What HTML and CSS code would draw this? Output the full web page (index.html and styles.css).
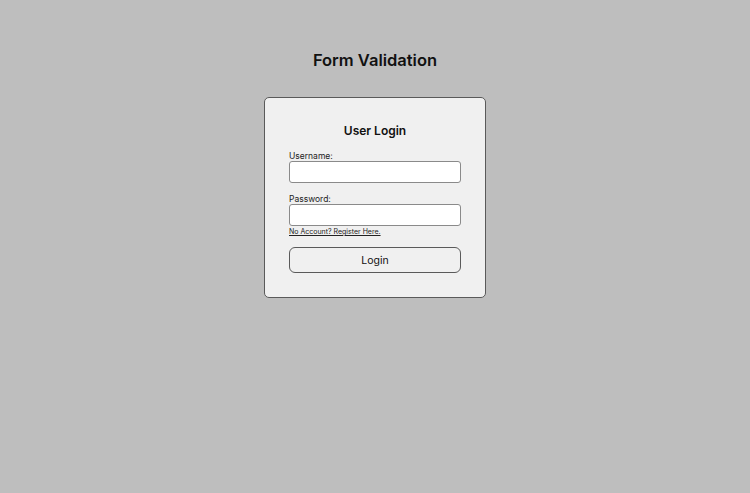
FILE: index.html
```html
<!DOCTYPE html>
<html>
<head>
<meta charset="utf-8">
<link rel="stylesheet" href="styles.css">
</head>
<body>
<main class="page">
  <h1 class="title">Form Validation</h1>
  <form class="card">
    <h2 class="card-title">User Login</h2>
    <label class="label" for="u">Username:</label>
    <input class="input" id="u" type="text">
    <label class="label label-pw" for="p">Password:</label>
    <input class="input" id="p" type="password">
    <a class="link" href="#">No Account? Register Here.</a>
    <button class="btn" type="button">Login</button>
  </form>
</main>
</body>
</html>
```
FILE: styles.css
```css
html, body {
  margin: 0;
  padding: 0;
  background: #bebebe;
  height: 100%;
}
body {
  font-family: "Inter", "Noto Sans", sans-serif;
  color: #111;
}
.page {
  display: flex;
  flex-direction: column;
  align-items: center;
  padding-top: 48px;
}
.title {
  margin: 0;
  font-size: 16.5px;
  font-weight: 600;
  line-height: 24px;
}
.card {
  margin-top: 25px;
  width: 172px;
  padding: 21px 24px 24px;
  background: #f0f0f0;
  border: 1px solid #5a5a5a;
  border-radius: 5px;
  display: flex;
  flex-direction: column;
}
.card-title {
  margin: 0 0 8px;
  text-align: center;
  font-size: 12px;
  font-weight: 600;
  line-height: 24px;
}
.label {
  font-size: 8.5px;
  line-height: 10px;
  margin: 0;
  color: #222;
}
.label-pw {
  margin-top: 11px;
}
.input {
  box-sizing: border-box;
  width: 172px;
  height: 22px;
  margin: 0;
  border: 1px solid #8a8a8a;
  border-radius: 3px;
  background: #fff;
}
.link {
  margin-top: 1px;
  font-size: 7px;
  line-height: 9px;
  color: #222;
  text-decoration: underline;
  align-self: flex-start;
}
.btn {
  margin-top: 11px;
  box-sizing: border-box;
  width: 172px;
  height: 26px;
  border: 1px solid #5a5a5a;
  border-radius: 6px;
  background: #f0f0f0;
  font-family: inherit;
  font-size: 10.5px;
  font-weight: 400;
  color: #111;
}
```
